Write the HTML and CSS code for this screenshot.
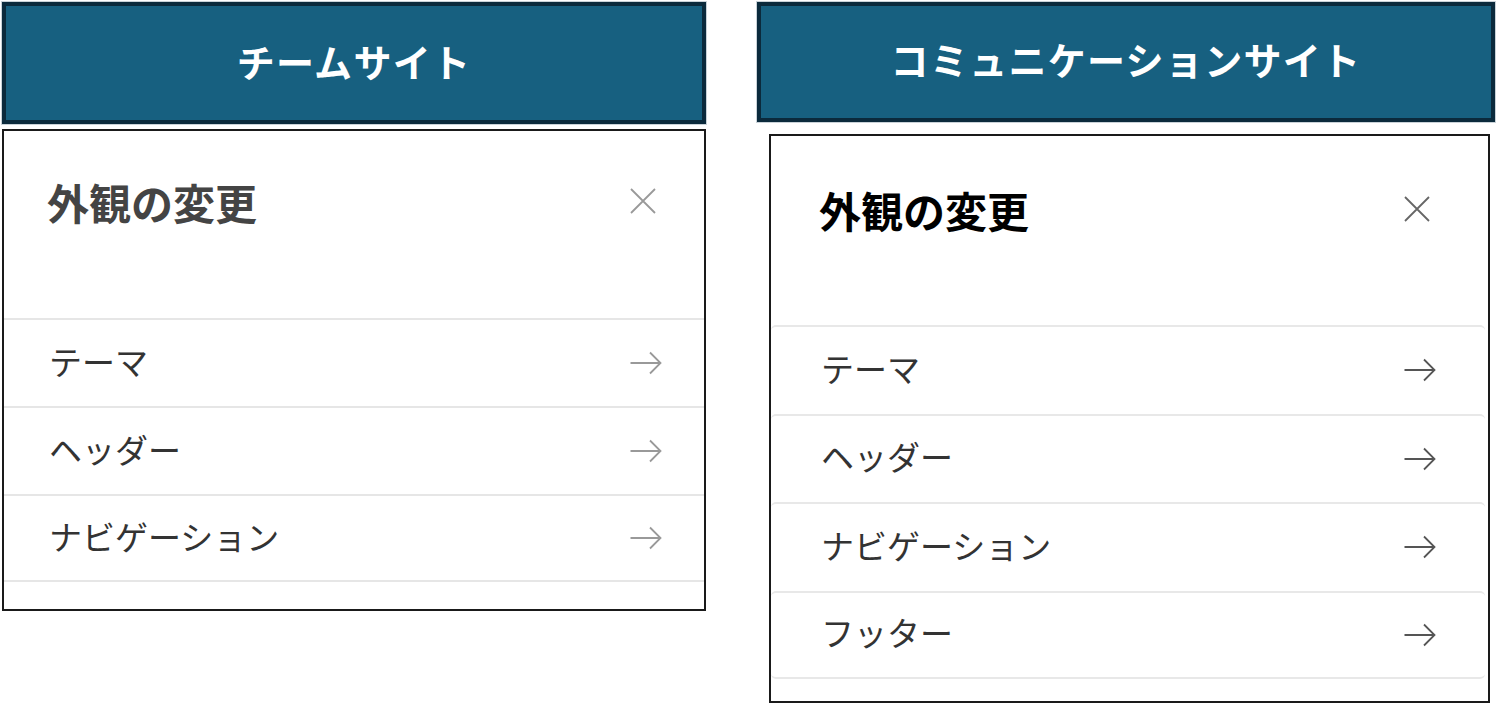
FILE: index.html
```html
<!DOCTYPE html>
<html lang="ja">
<head>
<meta charset="utf-8">
<title>外観の変更</title>
<link rel="stylesheet" href="styles.css">
</head>
<body>
<div class="page">
  <section class="col col-team">
    <header class="site-head site-head-team">チームサイト</header>
    <div class="panel panel-team">
      <div class="panel-top">
        <h2 class="panel-title">外観の変更</h2>
        <svg class="close" width="26" height="26" viewBox="0 0 26 26"><path d="M1 1L25 25M25 1L1 25" fill="none" stroke="currentColor" stroke-width="1.8"/></svg>
      </div>
      <ul class="list list-team">
        <li class="row"><span class="label">テーマ</span><svg class="arrow" width="32" height="28" viewBox="0 0 32 28"><path d="M0.5 14H30.5M20 3.5L30.5 14L20 24.5" fill="none" stroke="currentColor" stroke-width="1.8"/></svg></li>
        <li class="row"><span class="label">ヘッダー</span><svg class="arrow" width="32" height="28" viewBox="0 0 32 28"><path d="M0.5 14H30.5M20 3.5L30.5 14L20 24.5" fill="none" stroke="currentColor" stroke-width="1.8"/></svg></li>
        <li class="row"><span class="label">ナビゲーション</span><svg class="arrow" width="32" height="28" viewBox="0 0 32 28"><path d="M0.5 14H30.5M20 3.5L30.5 14L20 24.5" fill="none" stroke="currentColor" stroke-width="1.8"/></svg></li>
      </ul>
    </div>
  </section>
  <section class="col col-comm">
    <header class="site-head site-head-comm">コミュニケーションサイト</header>
    <div class="panel panel-comm">
      <div class="panel-top">
        <h2 class="panel-title">外観の変更</h2>
        <svg class="close" width="26" height="26" viewBox="0 0 26 26"><path d="M1 1L25 25M25 1L1 25" fill="none" stroke="currentColor" stroke-width="1.8"/></svg>
      </div>
      <ul class="list list-comm">
        <li class="row card"><span class="label">テーマ</span><svg class="arrow" width="32" height="28" viewBox="0 0 32 28"><path d="M0.5 14H30.5M20 3.5L30.5 14L20 24.5" fill="none" stroke="currentColor" stroke-width="1.8"/></svg></li>
        <li class="row card"><span class="label">ヘッダー</span><svg class="arrow" width="32" height="28" viewBox="0 0 32 28"><path d="M0.5 14H30.5M20 3.5L30.5 14L20 24.5" fill="none" stroke="currentColor" stroke-width="1.8"/></svg></li>
        <li class="row card"><span class="label">ナビゲーション</span><svg class="arrow" width="32" height="28" viewBox="0 0 32 28"><path d="M0.5 14H30.5M20 3.5L30.5 14L20 24.5" fill="none" stroke="currentColor" stroke-width="1.8"/></svg></li>
        <li class="row card card-last"><span class="label">フッター</span><svg class="arrow" width="32" height="28" viewBox="0 0 32 28"><path d="M0.5 14H30.5M20 3.5L30.5 14L20 24.5" fill="none" stroke="currentColor" stroke-width="1.8"/></svg></li>
      </ul>
    </div>
  </section>
</div>
</body>
</html>
```
FILE: styles.css
```css
html, body {
  margin: 0;
  padding: 0;
  background: #ffffff;
}
body {
  font-family: "Noto Sans CJK JP", "Noto Sans", sans-serif;
}
.page {
  display: flex;
  align-items: flex-start;
  padding: 2px 0 0 2px;
}
.col {
  display: flex;
  flex-direction: column;
}
.col-team {
  width: 704px;
}
.col-comm {
  width: 738px;
  margin-left: 51px;
}
.site-head {
  box-sizing: border-box;
  display: flex;
  align-items: center;
  justify-content: center;
  background: #176080;
  border: 4px solid #0b2a3c;
  outline: 1px solid #c9d2d8;
  color: #ffffff;
  font-size: 38px;
  font-weight: 700;
  letter-spacing: 1.3px;
  padding-bottom: 5px;
}
.site-head-team {
  height: 122px;
}
.site-head-comm {
  height: 120px;
  padding-bottom: 8px;
}
.panel {
  box-sizing: border-box;
  border: 2px solid #1a1a1a;
  background: #fff;
}
.panel-team {
  width: 704px;
  height: 482px;
  margin-top: 5px;
}
.panel-comm {
  width: 721px;
  height: 569px;
  margin-top: 12px;
  margin-left: 12px;
}
.panel-top {
  box-sizing: border-box;
  display: flex;
  align-items: flex-start;
  justify-content: space-between;
}
.panel-team .panel-top {
  height: 187px;
  padding: 46px 48px 0 43px;
}
.panel-comm .panel-top {
  height: 189px;
  padding: 49px 58px 0 48px;
}
.panel-title {
  margin: 0;
  font-size: 42px;
  line-height: 50px;
  font-weight: 700;
}
.panel-team .panel-title { color: #444444; }
.panel-comm .panel-title { color: #000000; }
.close {
  display: block;
}
.panel-team .close { color: #999999; margin-top: 11px; }
.panel-comm .close { color: #666666; margin-top: 11px; }
.list {
  list-style: none;
  margin: 0;
  padding: 0;
}
.row {
  box-sizing: border-box;
  display: flex;
  align-items: center;
  justify-content: space-between;
  height: 88px;
  font-size: 33px;
  color: #333333;
}
.label {
  margin-bottom: 5px;
}
.list-team .row {
  border-top: 2px solid #e6e6e6;
  padding: 0 42px 0 45px;
}
.list-team .row:last-child {
  border-bottom: 2px solid #e6e6e6;
}
.list-team .arrow { color: #999999; }
.list-comm {
  margin-right: 3px;
}
.card {
  height: 88.5px;
  border-top: 2px solid #e8e8e8;
  border-radius: 5px 5px 0 0;
  padding: 0 49px 0 50px;
}
.card-last {
  border-bottom: 2px solid #e8e8e8;
  border-radius: 5px;
}
.list-comm .arrow { color: #555555; }
.arrow {
  display: block;
}
```
